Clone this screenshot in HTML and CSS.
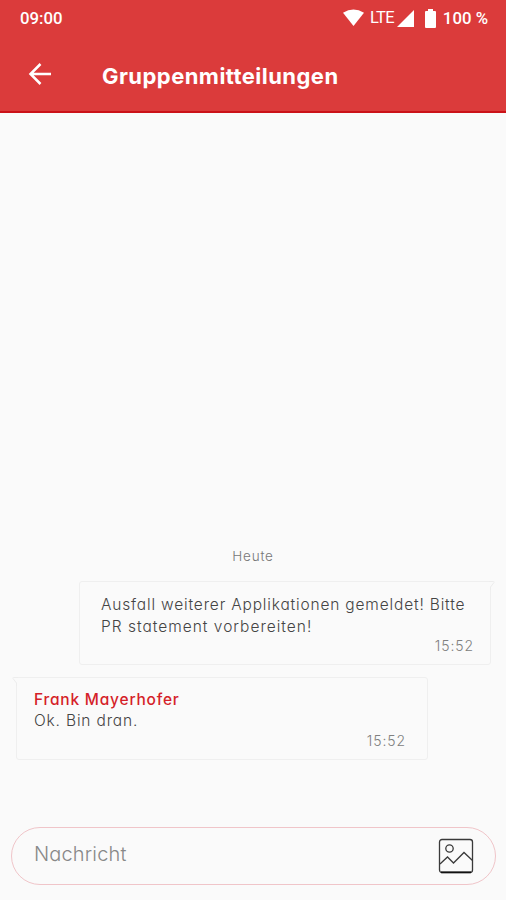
FILE: index.html
```
<!DOCTYPE html>
<html lang="de">
<head>
	<meta charset="UTF-8">
	<title>Gruppenmitteilungen</title>
	<link rel="stylesheet" href="styles.css">
</head>
<body>
	<div id="app">
		<header>
			<div class="status">
				<span class="clock">09:00</span>
				<svg class="wifi" width="21" height="18" viewBox="0 0 22 18"><path d="M0 3.5Q11-3.3 22 3.5L11 17.5z"/></svg>
				<span class="lte">LTE</span>
				<svg class="signal" width="17" height="17" viewBox="0 0 17 17"><path d="M17 0v17H0z"/></svg>
				<svg class="battery" width="11" height="19" viewBox="0 0 11 19"><path d="M3 0h5v2h2q1 0 1 1v15q0 1-1 1H1q-1 0-1-1V3q0-1 1-1h2z"/></svg>
				<span class="percent">100 %</span>
			</div>
			<div class="toolbar">
				<svg class="back" width="24" height="24" viewBox="0 0 24 24"><path d="M23 12H3M12.500 2L2.500 12l10 10"/></svg>
				<h1>Gruppenmitteilungen</h1>
			</div>
		</header>
		<main>
			<p class="day">Heute</p>
			<div class="bubble sent">
				<svg class="tail" width="6" height="9" viewBox="0 0 6 9"><path d="M0 .5h4.500q1 0 .5 1L1.500 6v3"/></svg>
				<p class="text">Ausfall weiterer Applikationen gemeldet! Bitte</p>
				<p class="text second">PR statement vorbereiten!</p>
				<time>15:52</time>
			</div>
			<div class="bubble received">
				<svg class="tail" width="6" height="9" viewBox="0 0 6 9"><path d="M6 .5H1.500q-1 0-.5 1L4.500 6v3"/></svg>
				<p class="name">Frank Mayerhofer</p>
				<p class="text">Ok. Bin dran.</p>
				<time>15:52</time>
			</div>
		</main>
		<footer>
			<span class="placeholder">Nachricht</span>
			<svg class="picture" width="36" height="36" viewBox="0 0 36 36">
				<rect x="1.500" y="1.500" width="33" height="33" rx="2.500"/>
				<circle cx="11.500" cy="10.500" r="3.700"/>
				<path d="M2 26l7.500-7 6 6L26 14.500l8.500 8"/>
				<path class="base" d="M3 34.300h30"/>
			</svg>
		</footer>
	</div>
</body>
</html>
```
FILE: styles.css
```
*{padding: 0;margin: 0;box-sizing: border-box;}
body{
	background: #fafafa;
	font-family: Inter, "Liberation Sans", sans-serif;
	font-feature-settings: "cv11";
	color: #444;
}
#app{
	width: 506px;
	height: 900px;
	display: flex;
	flex-direction: column;
	overflow: hidden;
}
p, h1, span, time{
	white-space: nowrap;
}
header{
	height: 113px;
	background: #db3b3b;
	border-bottom: 2px solid #cb1218;
	color: #fff;
}
header svg{
	fill: #fff;
	flex: none;
}
.status{
	height: 36px;
	padding: 0 18px 0 20px;
	display: flex;
	align-items: center;
	font: 500 16.800px/36px Roboto, sans-serif;
}
.wifi{
	margin-left: auto;
}
.lte{
	margin: 0 3px 0 6px;
	font-weight: 400;
	font-size: 16.500px;
	letter-spacing: -.7px;
}
.battery{
	margin: 0 7px 0 11px;
}
.toolbar{
	height: 75px;
	padding-left: 28px;
	display: flex;
	align-items: center;
}
.toolbar .back{
	fill: none;
	stroke: #fff;
	stroke-width: 2.500;
}
h1{
	margin: 4px 0 0 50px;
	font-size: 22px;
	font-weight: 700;
	line-height: 28px;
	letter-spacing: .450px;
}
main{
	flex: 1;
	display: flex;
	flex-direction: column;
	justify-content: flex-end;
	padding-bottom: 67px;
}
.day{
	margin-bottom: 16px;
	text-align: center;
	font-size: 13.500px;
	font-weight: 300;
	line-height: 18px;
	letter-spacing: .8px;
	color: #777;
}
.bubble{
	position: relative;
	width: 412px;
	height: 84px;
	padding: 12px 16px 0 21px;
	border: 1px solid #efefef;
	border-radius: 3px;
	display: flex;
	flex-direction: column;
}
.sent{
	margin: 0 0 12px 79px;
	border-top-right-radius: 0;
}
.received{
	height: 83px;
	margin-left: 16px;
	padding: 11px 21px 0 17px;
	border-top-left-radius: 0;
}
.tail{
	position: absolute;
	top: -1px;
	fill: #fafafa;
	stroke: #ededed;
}
.sent .tail{
	right: -5px;
}
.received .tail{
	left: -5px;
}
.text{
	font-size: 15.500px;
	font-weight: 300;
	line-height: 22px;
	letter-spacing: .830px;
}
.second{
	letter-spacing: 1px;
}
.name{
	color: #d51f29;
	font-size: 15.500px;
	font-weight: 500;
	line-height: 21px;
	letter-spacing: .780px;
}
time{
	align-self: flex-end;
	margin-top: -1px;
	font-size: 14px;
	font-weight: 300;
	line-height: 18px;
	letter-spacing: .9px;
	color: #808080;
}
.received time{
	margin-top: 0;
}
footer{
	width: 485px;
	height: 58px;
	margin: 0 0 15px 11px;
	padding: 0 21px 1px 22px;
	border: 1px solid #f0c5c9;
	border-radius: 29px;
	display: flex;
	align-items: center;
	justify-content: space-between;
}
.placeholder{
	margin-top: -4px;
	font-size: 20px;
	font-weight: 300;
	letter-spacing: .150px;
	color: #888;
}
.picture{
	fill: none;
	stroke: #3a3a3a;
	stroke-width: 1.300;
}
.picture .base{
	stroke: #111;
	stroke-width: 1.700;
}
```
